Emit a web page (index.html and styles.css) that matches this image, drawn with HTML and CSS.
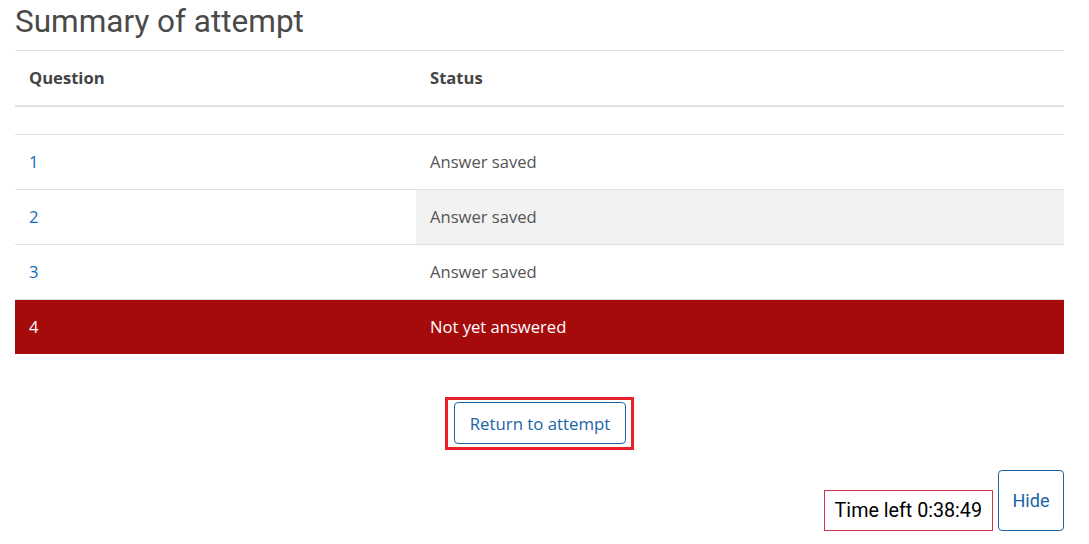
FILE: index.html
```html
<!DOCTYPE html>
<html lang="en">
<head>
  <meta charset="UTF-8">
  <meta name="viewport" content="width=device-width, initial-scale=1.0">
  <title>Summary of attempt</title>
  <link rel="stylesheet" href="styles.css">
</head>
<body>
  <h1>Summary of attempt</h1>

  <table class="summary">
    <thead>
      <tr>
        <th class="col-q">Question</th>
        <th>Status</th>
      </tr>
    </thead>
    <tbody>
      <tr class="spacer"><td></td><td></td></tr>
      <tr>
        <td class="col-q"><a href="#">1</a></td>
        <td>Answer saved</td>
      </tr>
      <tr>
        <td class="col-q"><a href="#">2</a></td>
        <td class="shaded">Answer saved</td>
      </tr>
      <tr>
        <td class="col-q"><a href="#">3</a></td>
        <td>Answer saved</td>
      </tr>
      <tr class="notyet">
        <td class="col-q"><a href="#">4</a></td>
        <td>Not yet answered</td>
      </tr>
    </tbody>
  </table>

  <div class="controls">
    <span class="highlight">
      <button class="btn-outline">Return to attempt</button>
    </span>
  </div>

  <div class="timer-bar">
    <div class="timer">Time left 0:38:49</div>
    <button class="btn-outline hide-btn">Hide</button>
  </div>
</body>
</html>
```

FILE: styles.css
```css
body {
  margin: 0;
  padding: 0 25px 0 15px;
  font-family: "Open Sans", sans-serif;
  color: #555;
  background: #fff;
}

h1 {
  font-family: Roboto, sans-serif;
  font-weight: 400;
  font-size: 31.5px;
  line-height: 38px;
  color: #4a4a4a;
  margin: 3px 0 9px;
}

.summary {
  width: 100%;
  border-collapse: collapse;
  font-size: 16.6px;
}

.summary th,
.summary td {
  text-align: left;
  padding: 0 14px;
  height: 54px;
  line-height: 22px;
  border-top: 1px solid #dee2e6;
}

.summary th {
  font-weight: 700;
  color: #444;
  border-bottom: 2px solid #dee2e6;
}

.summary .col-q {
  width: 373px;
}

.summary .spacer td {
  height: 27px;
  padding: 0;
  border-top: none;
}

.summary a {
  color: #0f6cbf;
  text-decoration: none;
}

.summary .shaded {
  background: #f2f2f2;
}

.summary .notyet td {
  background: #a50b0b;
  color: #fff;
}

.summary .notyet a {
  color: #fff;
}

.controls {
  display: flex;
  justify-content: center;
  margin-top: 43px;
}

.highlight {
  display: inline-block;
  border: 3px solid #e8202a;
  padding: 2px 5px 3px 6px;
}

.btn-outline {
  font-family: "Open Sans", sans-serif;
  font-size: 16.8px;
  color: #1a64a6;
  background: #fff;
  border: 1px solid #1a64a6;
  border-radius: 4px;
  cursor: pointer;
}

.highlight .btn-outline {
  display: block;
  width: 172px;
  height: 42px;
  padding: 0;
}

.timer-bar {
  display: flex;
  justify-content: flex-end;
  align-items: flex-end;
  gap: 5px;
  margin-top: 20px;
}

.timer {
  font-family: Roboto, sans-serif;
  font-size: 19.7px;
  color: #000;
  white-space: nowrap;
  border: 1px solid #d3334c;
  height: 39px;
  line-height: 39px;
  padding: 0 10px;
}

.hide-btn {
  font-family: Roboto, sans-serif;
  font-size: 18px;
  width: 66px;
  height: 61px;
  padding: 0;
}
```
